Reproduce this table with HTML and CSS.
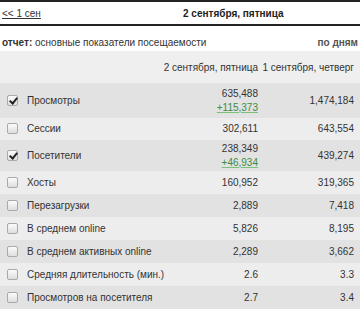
FILE: index.html
```html
<!DOCTYPE html>
<html lang="ru">
<head>
<meta charset="utf-8">
<link rel="stylesheet" href="styles.css">
</head>
<body>
<div class="page">
  <div class="nav">
    <a class="prev" href="#">&lt;&lt; 1 сен</a>
    <span class="title">2 сентября, пятница</span>
  </div>
  <div class="report">
    <span><b>отчет:</b> основные показатели посещаемости</span>
    <b class="period">по дням</b>
  </div>
  <table class="stats">
    <colgroup><col class="c0"><col class="c1"><col class="c2"></colgroup>
    <thead>
      <tr class="head"><th></th><th>2 сентября, пятница</th><th>1 сентября, четверг</th></tr>
    </thead>
    <tbody>
      <tr class="dark tall1"><td><span class="cb on"></span>Просмотры</td><td><div>635,488</div><a class="delta" href="#">+115,373</a></td><td>1,474,184</td></tr>
      <tr class="light short"><td><span class="cb"></span>Сессии</td><td>302,611</td><td>643,554</td></tr>
      <tr class="dark tall2"><td><span class="cb on"></span>Посетители</td><td><div>238,349</div><a class="delta" href="#">+46,934</a></td><td>439,274</td></tr>
      <tr class="light"><td><span class="cb"></span>Хосты</td><td>160,952</td><td>319,365</td></tr>
      <tr class="dark"><td><span class="cb"></span>Перезагрузки</td><td>2,889</td><td>7,418</td></tr>
      <tr class="light"><td><span class="cb"></span>В среднем online</td><td>5,826</td><td>8,195</td></tr>
      <tr class="dark"><td><span class="cb"></span>В среднем активных online</td><td>2,289</td><td>3,662</td></tr>
      <tr class="light"><td><span class="cb"></span>Средняя длительность (мин.)</td><td>2.6</td><td>3.3</td></tr>
      <tr class="dark"><td><span class="cb"></span>Просмотров на посетителя</td><td>2.7</td><td>3.4</td></tr>
    </tbody>
  </table>
</div>
</body>
</html>
```
FILE: styles.css
```css
html, body {
  margin: 0;
  padding: 0;
  background: #fff;
}
body {
  font-family: "Liberation Sans", Arial, sans-serif;
  font-size: 10px;
  color: #333;
}
.page {
  width: 360px;
}
.nav {
  display: grid;
  grid-template-columns: 181px 1fr;
  align-items: center;
  height: 22px;
  border-top: 2px solid #222;
  border-bottom: 2px solid #222;
}
.prev {
  padding-left: 2px;
  color: #333;
  text-decoration: underline;
}
.title {
  font-weight: bold;
  color: #222;
  padding-left: 2px;
}
.report {
  display: flex;
  justify-content: space-between;
  padding: 11px 2px 2px 2px;
  line-height: 12px;
}
.report b {
  color: #333;
}
.report .period {
  color: #555;
}
.stats {
  width: 360px;
  table-layout: fixed;
  border-collapse: collapse;
  border-spacing: 0;
}
.c0 { width: 160px; }
.c1 { width: 98px; }
.c2 { width: 102px; }
.stats th {
  font-weight: normal;
  text-align: right;
  height: 32px;
  padding: 0;
  color: #333;
  white-space: nowrap;
}
.stats th:last-child {
  padding-right: 6px;
}
.head {
  background: #efefef;
}
.stats td {
  padding: 0;
  height: 23px;
  line-height: 14px;
  text-align: right;
  white-space: nowrap;
}
.stats td:first-child {
  text-align: left;
  padding-left: 7px;
}
.stats td:last-child {
  padding-right: 6px;
}
.stats tr.tall1 td { height: 35px; }
.stats tr.tall2 td { height: 31px; }
.stats tr.short td { height: 22px; }
.dark { background: #e2e2e2; }
.light { background: #ededed; }
.cb {
  display: inline-block;
  width: 9px;
  height: 9px;
  border: 1px solid #a9a9a9;
  border-radius: 2px;
  background: linear-gradient(#fbfbfb, #dedede);
  vertical-align: -2px;
  margin-right: 9px;
  position: relative;
}
.cb.on::after {
  content: "";
  position: absolute;
  left: 3px;
  top: 0px;
  width: 3px;
  height: 6px;
  border-right: 2px solid #222;
  border-bottom: 2px solid #222;
  transform: rotate(40deg);
}
.delta {
  color: #3d8b3d;
  text-decoration: underline;
  text-decoration-color: #79c079;
}
```
